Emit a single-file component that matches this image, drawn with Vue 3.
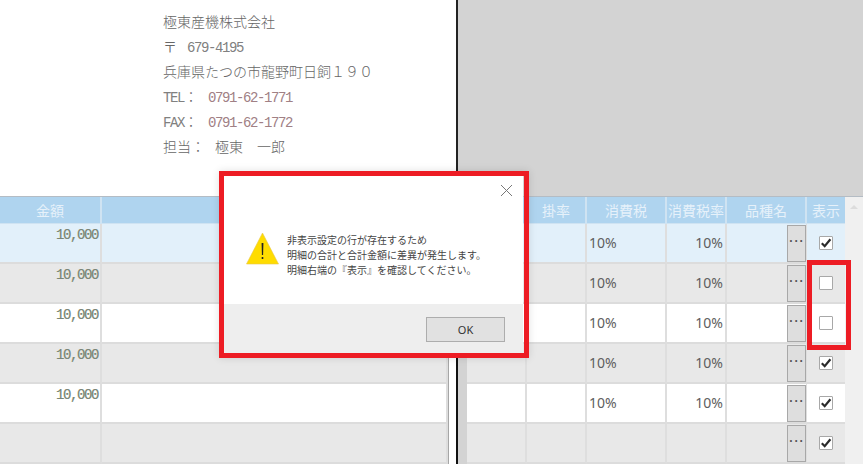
<script setup>
const address = ['極東産機株式会社']
const rows = [
  { tone: 'sel', amount: '10,000', rate: '10%', on: true },
  { tone: 'alt', amount: '10,000', rate: '10%', on: false },
  { tone: 'plain', amount: '10,000', rate: '10%', on: false },
  { tone: 'alt', amount: '10,000', rate: '10%', on: true },
  { tone: 'plain', amount: '10,000', rate: '10%', on: true },
  { tone: 'alt', amount: '', rate: '', on: true },
]
</script>

<template>
  <div class="page">
    <section class="top">
      <div class="sheet">
        <div class="addr">
          <p v-for="line in address" :key="line">{{ line }}</p>
          <p class="pair"><span class="lab wide">〒</span><span class="mono">679-4195</span></p>
          <p>兵庫県たつの市龍野町日飼１９０</p>
          <p class="pair"><span class="lab"><span class="mono">TEL</span>：</span><span class="mono tel">0791-62-1771</span></p>
          <p class="pair"><span class="lab"><span class="mono">FAX</span>：</span><span class="mono tel">0791-62-1772</span></p>
          <p class="pair"><span class="lab person">担当：</span><span class="given">極東</span><span>一郎</span></p>
        </div>
      </div>
      <div class="rule"></div>
      <div class="blank"></div>
    </section>

    <section class="table">
      <div class="pane left">
        <div class="head lcols">
          <div class="hc">金額</div>
          <div class="hc"></div>
        </div>
        <div v-for="(r, i) in rows" :key="i" class="row lcols" :class="r.tone">
          <div class="c amount">{{ r.amount }}</div>
          <div class="c"></div>
        </div>
      </div>

      <div class="splitter">
        <div class="sp-white"></div>
        <div class="sp-black"></div>
        <div class="sp-grey"></div>
      </div>

      <div class="pane right">
        <div class="head rcols">
          <div class="hc"></div>
          <div class="hc">掛率</div>
          <div class="hc">消費税</div>
          <div class="hc">消費税率</div>
          <div class="hc">品種名</div>
          <div class="hc last">表示</div>
        </div>
        <div v-for="(r, i) in rows" :key="i" class="row rcols" :class="r.tone">
          <div class="c"></div>
          <div class="c"></div>
          <div class="c pct">{{ r.rate }}</div>
          <div class="c pct end">{{ r.rate }}</div>
          <div class="c pick"><button class="dots" type="button">···</button></div>
          <div class="c show">
            <span class="check">
              <svg v-if="r.on" width="12" height="12" viewBox="0 0 12 12">
                <path d="M1.8 6.2 L4.7 9.2 L10.4 2.2" fill="none" stroke="#2b2b2b" stroke-width="2.2" />
              </svg>
            </span>
          </div>
        </div>
      </div>

      <div class="scroll"><span class="arrow"></span></div>
    </section>

    <div class="frame dialog-frame">
      <div class="dialog">
        <div class="d-body">
          <svg class="close" width="13" height="13" viewBox="0 0 13 13">
            <path d="M1 1 L12 12 M12 1 L1 12" stroke="#777" stroke-width="1" fill="none" />
          </svg>
          <svg class="warn" width="33" height="33" viewBox="0 0 33 33">
            <path d="M16.5 1 L32.5 32 L0.5 32 Z" fill="#ffdc00" stroke="#e8c84a" stroke-width="0.6" />
            <path d="M15.6 11 H17.4 L17.1 23 H15.9 Z" fill="#222" />
            <rect x="15.7" y="25" width="1.6" height="2" fill="#222" />
          </svg>
          <div class="msg">
            <p>非表示設定の行が存在するため</p>
            <p>明細の合計と合計金額に差異が発生します。</p>
            <p>明細右端の『表示』を確認してください。</p>
          </div>
        </div>
        <div class="d-foot">
          <button class="ok" type="button">OK</button>
        </div>
      </div>
    </div>

    <div class="frame check-frame"></div>
  </div>
</template>

<style scoped>
.page {
  position: relative;
  width: 863px;
  height: 464px;
  overflow: hidden;
  display: flex;
  flex-direction: column;
  background: #fff;
  font-family: "Noto Sans CJK JP", sans-serif;
  color: #555;
}
p { margin: 0; }

.top { display: flex; height: 196px; flex: none; }
.sheet { width: 456px; background: #fff; }
.rule { width: 2px; background: #222; }
.blank { flex: 1; background: #d3d3d3; }
.addr {
  padding: 9px 0 0 163px;
  font-size: 14px;
  line-height: 25px;
  font-weight: 300;
  color: #666;
  white-space: pre;
}
.addr p { height: 25px; }
.pair { display: flex; align-items: baseline; }
.mono {
  font-family: "Liberation Mono", monospace;
  font-size: 14px;
  letter-spacing: -1.4px;
  font-weight: 400;
  color: #808080;
}
.lab { width: 45px; flex: none; }
.lab.wide { width: 24px; }
.lab.person { width: 52px; }
.given { width: 42px; flex: none; }
.mono.tel { color: #a08085; }

.table { flex: 1; display: flex; border-top: 1px solid #b4bcc4; min-height: 0; }
.pane { display: flex; flex-direction: column; }
.left { width: 448px; flex: none; }
.right { width: 378px; flex: none; }
.lcols { display: grid; grid-template-columns: 102px 346px; }
.rcols { display: grid; grid-template-columns: 60px 60px 80px 60px 80px 38px; }

.head {
  height: 27px;
  flex: none;
  background: #afd4ef;
  border-bottom: 1px solid #cfe3f2;
  box-sizing: border-box;
}
.hc {
  border-right: 2px solid #cfe3f2;
  color: #e6f1fa;
  font-size: 14px;
  line-height: 27px;
  text-align: center;
}
.hc.last { border-right: 0; }
.row { height: 40px; flex: none; }
.row .c {
  border-right: 2px solid #dedede;
  border-bottom: 2px solid #dcdcdc;
  box-sizing: border-box;
  height: 40px;
}
.sel { background: #e2f0fa; }
.alt { background: #e8e8e8; }
.plain { background: #fff; }

.row .amount {
  font-family: "Liberation Mono", monospace;
  font-size: 14px;
  letter-spacing: -1.4px;
  line-height: 22px;
  text-align: right;
  padding-right: 2px;
  color: #7a8578;
  text-shadow: -0.3px 0 rgba(230, 170, 40, 0.35), 0.3px 0 rgba(40, 170, 210, 0.35);
}
.row .pct {
  font-family: "Noto Sans", sans-serif;
  font-size: 14px;
  line-height: 38px;
  padding-left: 2px;
  color: #5e5e5e;
}
.row .pct.end { text-align: right; padding: 0 2px 0 0; }
.row .pick { display: flex; justify-content: flex-end; align-items: center; border-right-width: 1px; }
.dots {
  width: 19px;
  height: 37px;
  box-sizing: border-box;
  padding: 0 0 4px 1px;
  border: 1px solid #a8a8a8;
  background: #dedede;
  color: #555;
  font-family: "Liberation Sans", sans-serif;
  font-size: 12px;
  font-weight: 700;
  letter-spacing: 1.2px;
}
.row .show { display: flex; justify-content: center; align-items: center; border-right: 0; }
.check {
  width: 14px;
  height: 14px;
  box-sizing: border-box;
  border: 1px solid #a8a8a8;
  border-radius: 1px;
  background: #fff;
  display: flex;
  align-items: center;
  justify-content: center;
}

.splitter {
  display: flex;
  width: 19px;
  flex: none;
  margin-right: -1px;
  border-right: 1px solid #a6a6a6;
  box-shadow: inset 1px 0 0 #a6a6a6;
  box-sizing: content-box;
}
.sp-white { width: 8px; }
.sp-black { width: 2px; background: #111; }
.sp-grey { flex: 1; background: #d3d3d3; }

.scroll { flex: 1; background: #f0f0f0; display: flex; justify-content: center; padding-top: 8px; }
.arrow {
  width: 0;
  height: 0;
  border-left: 4px solid transparent;
  border-right: 4px solid transparent;
  border-bottom: 4px solid #dcdcdc;
}

.frame {
  position: absolute;
  box-sizing: border-box;
  border: 5px solid #ed1c24;
}
.dialog-frame {
  left: 219px;
  top: 171px;
  width: 310px;
  height: 187px;
  padding-right: 1px;
  box-shadow: 0 0 8px rgba(0, 0, 0, 0.12);
}
.check-frame {
  left: 807px;
  top: 260px;
  width: 44px;
  height: 90px;
}
.dialog { height: 100%; display: flex; flex-direction: column; background: #fff; }
.d-body { position: relative; flex: 1; display: flex; align-items: flex-start; padding: 56px 0 0 22px; gap: 8px; }
.close { position: absolute; right: 10px; top: 8px; }
.warn { flex: none; }
.msg {
  font-size: 10px;
  line-height: 15px;
  color: #444;
  white-space: nowrap;
}
.d-foot {
  height: 49px;
  flex: none;
  background: #eeeeee;
  display: flex;
  justify-content: flex-end;
  align-items: flex-start;
  padding: 13px 18px 0 0;
  box-sizing: border-box;
}
.ok {
  width: 79px;
  height: 25px;
  padding: 0;
  border: 1px solid #adadad;
  background: #e1e1e1;
  color: #333;
  font-family: "Noto Sans", sans-serif;
  font-size: 11px;
}
</style>
